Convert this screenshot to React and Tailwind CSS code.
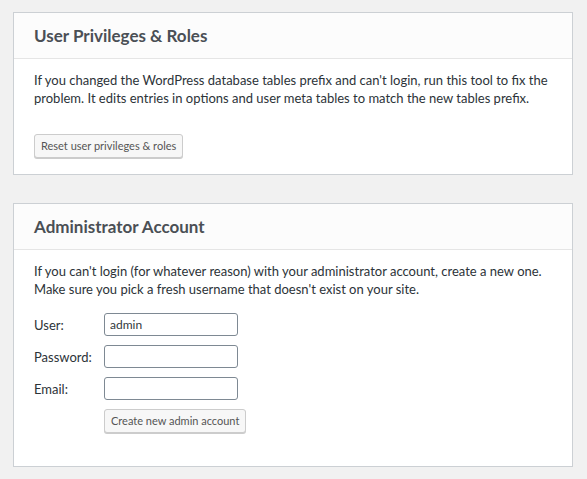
const fieldClass =
    "h-[23px] w-[134px] rounded-[3px] border border-[#7e8993] bg-white px-[5px] text-[12px] text-[#32373c] outline-none";

const btnClass =
    "h-[24px] rounded-[3px] border border-[#ccc] bg-[#f7f7f7] px-[6px] text-[11px] text-[#555] shadow-[0_1px_0_#ccc]";

const Card = ({ title, children, className = "" }) => (
    <div className="border border-[#ccd0d4] bg-white">
        <div className="flex h-[46px] items-center border-b border-[#e5e5e5] bg-[#fcfcfc] px-[20px]">
            <h2 className="text-[17px] font-bold text-[#4a4f55]">{title}</h2>
        </div>
        <div className={`px-[20px] ${className}`}>{children}</div>
    </div>
);

const App = () => {
    const rows = [
        { label: "User:", value: "admin" },
        { label: "Password:", value: "" },
        { label: "Email:", value: "" },
    ];

    return (
        <div
            className="min-h-[479px] bg-[#f1f1f1] pb-[12px] pl-[13px] pr-[14px] pt-[12px] text-[13px] leading-[18px] text-[#2c3338]"
            style={{ fontFamily: 'Lato, "Noto Sans", sans-serif' }}
        >
            {/* User Privileges */}
            <Card title="User Privileges & Roles" className="pb-[16px] pt-[12px]">
                <p className="whitespace-nowrap">
                    If you changed the WordPress database tables prefix and can't login, run this tool to fix the
                    <br />
                    problem. It edits entries in options and user meta tables to match the new tables prefix.
                </p>
                <button type="button" className={`${btnClass} mt-[27px]`}>
                    Reset user privileges &amp; roles
                </button>
            </Card>

            <div className="h-[28px]" />

            {/* Administrator Account */}
            <Card title="Administrator Account" className="pb-[33px] pt-[12px]">
                <p className="whitespace-nowrap">
                    If you can't login (for whatever reason) with your administrator account, create a new one.
                    <br />
                    Make sure you pick a fresh username that doesn't exist on your site.
                </p>
                <div className="mt-[15px] flex flex-col gap-[9px]">
                    {rows.map((r) => (
                        <div key={r.label} className="flex items-center">
                            <label className="w-[70px]">{r.label}</label>
                            <input type="text" defaultValue={r.value} className={fieldClass} />
                        </div>
                    ))}
                    <div className="pl-[70px]">
                        <button type="button" className={btnClass}>
                            Create new admin account
                        </button>
                    </div>
                </div>
            </Card>
        </div>
    );
};

export default App;
